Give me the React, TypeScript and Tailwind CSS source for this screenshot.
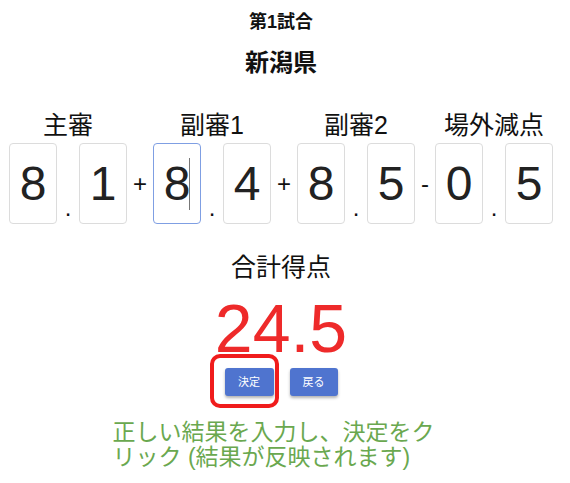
import React from "react";

const FONT = "font-['Liberation_Sans','Noto_Sans_CJK_JP',sans-serif]";

function Box({ v, focused }: { v: string; focused?: boolean }) {
  return (
    <div
      className={
        "relative w-[48px] h-[81px] rounded-[4px] flex items-center justify-center text-[48px] leading-none text-[#222] bg-white " +
        (focused ? "border border-[#7f9fe3]" : "border border-[#dcdcdc]")
      }
    >
      <span>{v}</span>
      {focused && <span className="absolute left-[35px] top-[14px] w-[1px] h-[52px] bg-[#777]" />}
    </div>
  );
}

function Group({ label, a, b, focusA }: { label: string; a: string; b: string; focusA?: boolean }) {
  return (
    <div className="flex flex-col items-center w-[118px]">
      <div className="text-[25px] leading-[25px] text-[#111] whitespace-nowrap">{label}</div>
      <div className="mt-[5px] flex">
        <Box v={a} focused={focusA} />
        <div className="w-[22px] h-[81px] flex items-end justify-center pb-[4px] text-[24px] leading-none text-[#111]">.</div>
        <Box v={b} />
      </div>
    </div>
  );
}

function Op({ c, w }: { c: string; w: string }) {
  return (
    <div className={"h-[81px] flex items-center justify-center text-[24px] leading-none text-[#111] " + w}>{c}</div>
  );
}

export default function App() {
  return (
    <div className={"relative w-[570px] h-[483px] bg-white pr-2 pt-[13px] " + FONT}>
      <div className="text-center text-[18px] leading-[18px] font-bold text-[#111]">第1試合</div>
      <div className="mt-[20px] text-center text-[24px] leading-[24px] font-bold text-[#111]">新潟県</div>
      <div className="mt-[38px] flex justify-center items-end">
        <Group label="主審" a="8" b="1" />
        <Op c="+" w="w-[26px]" />
        <Group label="副審1" a="8" b="4" focusA />
        <Op c="+" w="w-[26px]" />
        <Group label="副審2" a="8" b="5" />
        <Op c="-" w="w-[20px]" />
        <Group label="場外減点" a="0" b="5" />
      </div>
      <div className="mt-[31px] text-center text-[25px] leading-[25px] text-[#111]">合計得点</div>
      <div className="mt-[14px] text-center text-[68px] leading-[68px] text-[#ee2a2a]">24.5</div>
      <div className="mt-[6px] flex justify-center gap-[16px]">
        <button className="w-[49px] h-[28px] rounded-[3px] bg-[#4f74cf] text-white text-[11px] shadow-[0_2px_3px_rgba(0,0,0,0.3)]">決定</button>
        <button className="w-[48px] h-[28px] rounded-[3px] bg-[#4f74cf] text-white text-[11px] shadow-[0_2px_3px_rgba(0,0,0,0.3)]">戻る</button>
      </div>
      <div className="mt-[24px] mx-auto w-[337px] text-left text-[23px] leading-[25px] text-[#6aa84f]">
        正しい結果を入力し、決定をクリック (結果が反映されます)
      </div>
      <div className="absolute left-[210px] top-[354px] w-[69px] h-[54px] border-[4px] border-[#f01c1c] rounded-[10px]" />
    </div>
  );
}
